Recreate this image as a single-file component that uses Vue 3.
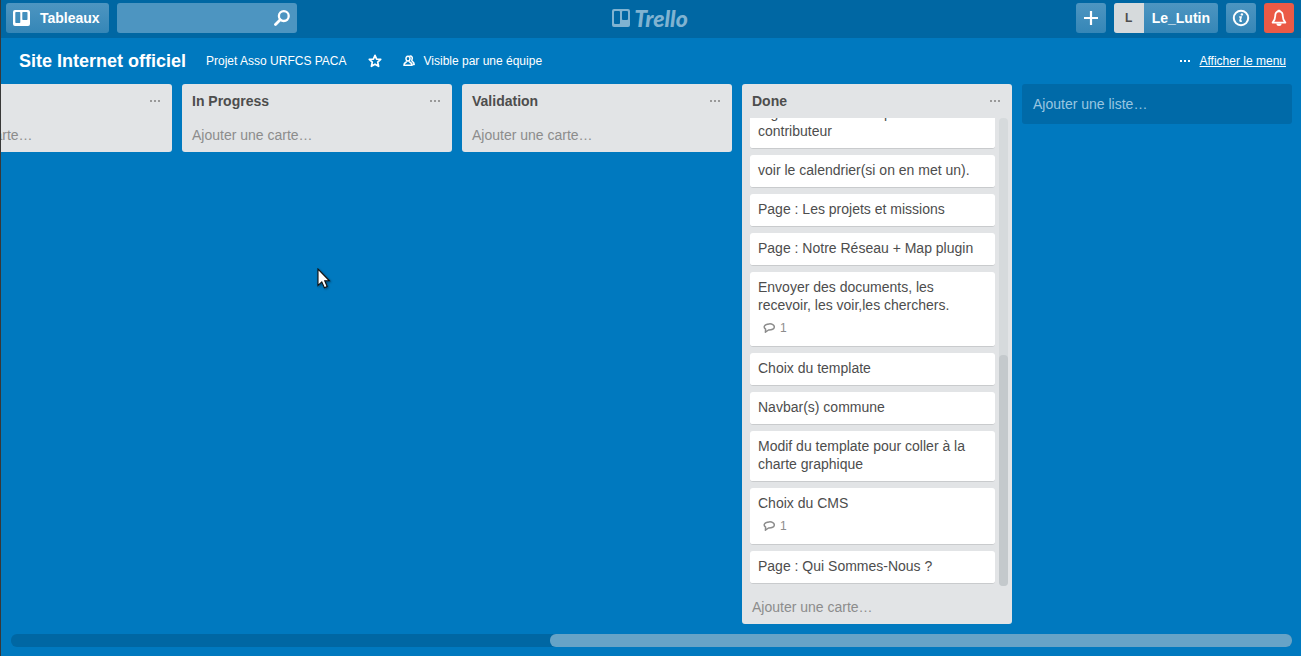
<script setup>
const lists = [
  { id: 1, title: '', cards: [] },
  { id: 2, title: 'In Progress', cards: [] },
  { id: 3, title: 'Validation', cards: [] },
  {
    id: 4,
    title: 'Done',
    scroll: { size: 49.4 },
    cards: [
      { text: 'Signaler une entrée pour le contributeur' },
      { text: 'voir le calendrier(si on en met un).' },
      { text: 'Page : Les projets et missions' },
      { text: 'Page : Notre Réseau + Map plugin' },
      { text: 'Envoyer des documents, les recevoir, les voir,les cherchers.', comments: 1 },
      { text: 'Choix du template' },
      { text: 'Navbar(s) commune' },
      { text: 'Modif du template pour coller à la charte graphique' },
      { text: 'Choix du CMS', comments: 1 },
      { text: 'Page : Qui Sommes-Nous ?' },
    ],
  },
]
const boardScroll = 57.9
</script>

<template>
  <div class="app">
    <header class="topbar">
      <div class="side">
        <button class="btn boards" type="button">
          <svg width="17" height="16" viewBox="0 0 17 16" aria-hidden="true">
            <path fill="#fff" fill-rule="evenodd" d="M2 0h13a2 2 0 0 1 2 2v12a2 2 0 0 1-2 2H2a2 2 0 0 1-2-2V2a2 2 0 0 1 2-2ZM3 2Q2.3 2 2.3 2.7V12.3Q2.3 13 3 13H6.6Q7.3 13 7.3 12.3V2.7Q7.3 2 6.6 2ZM10 2Q9.3 2 9.3 2.7V9.3Q9.3 10 10 10H13.8Q14.5 10 14.5 9.3V2.7Q14.5 2 13.8 2Z" />
          </svg>
          <span>Tableaux</span>
        </button>
        <div class="search">
          <input type="text" aria-label="Rechercher" />
          <button type="button" class="plain" aria-label="Lancer la recherche">
            <svg width="16" height="16" viewBox="0 0 16 16" fill="none" stroke="#fff" aria-hidden="true">
              <circle cx="9.8" cy="6.1" r="4.9" stroke-width="2.3" />
              <path d="M6.2 9.8 1.5 14.5" stroke-width="2.8" stroke-linecap="round" />
            </svg>
          </button>
        </div>
      </div>

      <a class="logo" href="#" aria-label="Trello">
        <svg width="18" height="18" viewBox="0 0 18 18" aria-hidden="true">
          <path fill="currentColor" fill-rule="evenodd" d="M2 0h14a2 2 0 0 1 2 2v14a2 2 0 0 1-2 2H2a2 2 0 0 1-2-2V2a2 2 0 0 1 2-2ZM3 2a1 1 0 0 0-1 1v11a1 1 0 0 0 1 1h4a1 1 0 0 0 1-1V3a1 1 0 0 0-1-1ZM11 2a1 1 0 0 0-1 1v7a1 1 0 0 0 1 1h4a1 1 0 0 0 1-1V3a1 1 0 0 0-1-1Z" />
        </svg>
        <span>Trello</span>
      </a>

      <div class="side end">
        <button class="btn square" type="button" aria-label="Créer">
          <svg width="14" height="14" viewBox="0 0 14 14" stroke="#fff" stroke-width="2.2" aria-hidden="true">
            <path d="M7 0v14M0 7h14" />
          </svg>
        </button>
        <button class="btn member" type="button">
          <span class="avatar">L</span>
          <span class="name">Le_Lutin</span>
        </button>
        <button class="btn square" type="button" aria-label="Informations">
          <svg width="18" height="18" viewBox="0 0 18 18" fill="none" stroke="#fff" aria-hidden="true">
            <circle cx="9" cy="9" r="7.2" stroke-width="2" />
            <path d="M7.2 8H9L8.1 11.6Q8 12.4 9.9 12" stroke-width="1.7" />
            <circle cx="9.9" cy="5.4" r="1.2" fill="#fff" stroke="none" />
          </svg>
        </button>
        <button class="btn square alert" type="button" aria-label="Notifications">
          <svg width="16" height="18" viewBox="0 0 16 18" fill="none" stroke="#fff" stroke-linejoin="round" aria-hidden="true">
            <path d="M8 2.4C5.2 2.4 4.2 4.5 4.2 7.2C4.2 10 3.5 11.5 1.6 13.6H14.4C12.5 11.5 11.8 10 11.8 7.2C11.8 4.5 10.8 2.4 8 2.4Z" stroke-width="1.8" />
            <path d="M7.4 1.8h1.2" stroke-width="2" stroke-linecap="round" />
            <path d="M5.4 14.5a2.6 2.5 0 0 0 5.2 0Z" fill="#fff" stroke="none" />
          </svg>
        </button>
      </div>
    </header>

    <div class="boardbar">
      <h1>Site Internet officiel</h1>
      <a class="org" href="#">Projet Asso URFCS PACA</a>
      <button class="plain star" type="button" aria-label="Ajouter aux favoris">
        <svg width="14" height="14" viewBox="0 0 14 14" fill="none" stroke="#fff" stroke-width="1.7" stroke-linejoin="round" aria-hidden="true">
          <path d="M7 1.4 8.6 5.1 12.7 5.4 9.7 8.1 10.6 12.3 7 10.2 3.4 12.3 4.3 8.1 1.3 5.4 5.4 5.1Z" />
        </svg>
      </button>
      <a class="visibility" href="#">
        <svg width="12" height="12" viewBox="0 0 12 12" fill="none" stroke="#fff" stroke-width="1.5" stroke-linejoin="round" aria-hidden="true">
          <path d="M5 1.3C3.4 1.3 2.9 2.5 3 3.8C3.1 5.2 4 6 5 6S6.9 5.2 7 3.8C7.1 2.5 6.6 1.3 5 1.3Z" />
          <path d="M3.9 6.2C3.9 7.4.9 7.2.9 10.3H9.1C9.1 7.2 6.1 7.4 6.1 6.2" />
          <path d="M6.6 1C8.8.6 9.8 2.4 9 4.4C8.4 5.8 8.6 6 9.6 6.6C10.8 7.4 11.2 8 11.2 9.6H9.4" />
        </svg>
        <span>Visible par une équipe</span>
      </a>
      <a class="show-menu" href="#">
        <svg width="10" height="2" viewBox="0 0 10 2" fill="#fff" aria-hidden="true">
          <path d="M0 0h2v2H0ZM4 0h2v2H4ZM8 0h2v2H8Z" />
        </svg>
        <span>Afficher le menu</span>
      </a>
    </div>

    <main class="lists">
      <section v-for="list in lists" :key="list.id" class="list">
        <header class="list-head">
          <h2 v-if="list.title">{{ list.title }}</h2>
          <button class="plain more" type="button" aria-label="Actions de la liste">
            <svg width="10" height="2" viewBox="0 0 10 2" fill="#999" aria-hidden="true">
              <path d="M0 0h2v2H0ZM4 0h2v2H4ZM8 0h2v2H8Z" />
            </svg>
          </button>
        </header>
        <div v-if="list.cards.length" class="list-body">
          <div class="cards">
            <article v-for="card in list.cards" :key="card.text" class="card">
              <p>{{ card.text }}</p>
              <div v-if="card.comments" class="badge">
                <svg width="12" height="10" viewBox="0 0 12 10" fill="none" stroke="#8c8c8c" stroke-width="1.5" stroke-linejoin="round" aria-hidden="true">
                  <path d="M6.2.9C9 .7 11.3 1.8 11.3 3.9C11.3 6 8.8 7.1 5.5 7L2.4 9.2L2.6 6.2C.2 4.4.8 1.2 6.2.9Z" />
                </svg>
                <span>{{ card.comments }}</span>
              </div>
            </article>
          </div>
          <div class="track" aria-hidden="true">
            <div class="thumb" :style="{ height: list.scroll.size + '%' }"></div>
          </div>
        </div>
        <a class="add-card" href="#">Ajouter une carte…</a>
      </section>
      <a class="add-list" href="#">Ajouter une liste…</a>
    </main>

    <div class="hscroll" aria-hidden="true">
      <div class="hthumb" :style="{ width: boardScroll + '%' }"></div>
    </div>

    <svg class="cursor" width="14" height="22" viewBox="0 0 14 22" aria-hidden="true">
      <path d="M1 1V17.4L4.8 13.9L7.4 19.8L10.2 18.5L7.7 12.8H12.4Z" fill="#fff" stroke="#111" stroke-width="1.1" />
    </svg>
  </div>
</template>

<style>
body {
  margin: 0;
}
</style>

<style scoped>
.app {
  position: relative;
  box-sizing: border-box;
  height: 100vh;
  display: flex;
  flex-direction: column;
  overflow: hidden;
  border-left: 1px solid #383838;
  background: #0079bf;
  color: #4d4d4d;
  font: 14px/18px "Liberation Sans", Arial, sans-serif;
}

a {
  color: inherit;
  text-decoration: none;
}

h1,
h2,
p {
  margin: 0;
}

svg {
  display: block;
  flex: none;
}

button {
  font: inherit;
  color: inherit;
  border: 0;
  cursor: pointer;
}

.plain {
  display: flex;
  padding: 0;
  background: none;
}

.topbar {
  flex: none;
  display: flex;
  align-items: center;
  height: 38px;
  padding: 0 7px 2px 5px;
  box-sizing: border-box;
  background: #0067a3;
  color: #fff;
}

.side {
  flex: 1;
  display: flex;
  gap: 8px;
}

.end {
  justify-content: flex-end;
}

.btn {
  display: flex;
  align-items: center;
  height: 30px;
  padding: 0;
  border-radius: 3px;
  background: linear-gradient(#4d95c1, #3586b7);
  font-weight: bold;
}

.boards {
  gap: 10px;
  padding: 0 9px 0 7px;
}

.search {
  display: flex;
  align-items: center;
  width: 180px;
  height: 30px;
  padding-right: 7px;
  box-sizing: border-box;
  border-radius: 3px;
  background: #4d95c1;
}

.search input {
  flex: 1;
  min-width: 0;
  height: 30px;
  padding: 0 8px;
  box-sizing: border-box;
  border: 0;
  outline: 0;
  background: none;
  color: #fff;
  font: inherit;
}

.logo {
  display: flex;
  align-items: center;
  gap: 4px;
  color: #80b3d1;
  font: italic 900 23px/24px Lato, "Liberation Sans", sans-serif;
}

.square {
  width: 30px;
  justify-content: center;
}

.alert {
  background: #eb5a46;
}

.member {
  overflow: hidden;
}

.avatar {
  width: 30px;
  background: #d6dadc;
  color: #4d4d4d;
  font-size: 12px;
  line-height: 30px;
}

.name {
  padding: 0 8px;
}

.boardbar {
  flex: none;
  display: flex;
  align-items: center;
  height: 46px;
  padding: 0 15px 0 18px;
  box-sizing: border-box;
  color: #fff;
  font-size: 12px;
}

h1 {
  font-size: 18px;
  line-height: 24px;
}

.org {
  margin-left: 20px;
}

.star {
  margin-left: 21px;
}

.visibility {
  display: flex;
  align-items: center;
  gap: 9px;
  margin-left: 21px;
}

.show-menu {
  display: flex;
  align-items: center;
  gap: 10px;
  margin-left: auto;
}

.show-menu span {
  text-decoration: underline;
}

.lists {
  flex: 1;
  min-height: 0;
  display: flex;
  align-items: flex-start;
  justify-content: flex-end;
  gap: 10px;
  padding-right: 9px;
  overflow: hidden;
}

.list {
  flex: none;
  display: flex;
  flex-direction: column;
  width: 270px;
  max-height: 100%;
  border-radius: 3px;
  background: #e2e4e6;
}

.list-head {
  flex: none;
  display: flex;
  align-items: center;
  height: 34px;
  padding: 0 12px 0 10px;
}

h2 {
  font-size: 14px;
  line-height: 18px;
}

.more {
  margin-left: auto;
}

.list-body {
  flex: 0 1 auto;
  min-height: 0;
  display: flex;
  gap: 4px;
  padding: 0 4px 4px 8px;
  overflow: hidden;
}

.cards {
  flex: 1;
  min-width: 0;
  display: flex;
  flex-direction: column;
  justify-content: flex-end;
  gap: 6px;
  padding-bottom: 2px;
  overflow: hidden;
}

.card {
  flex: none;
  padding: 6px 8px 8px;
  border-bottom: 1px solid #c9cbcd;
  border-radius: 3px;
  background: #fff;
}

.badge {
  display: flex;
  align-items: center;
  gap: 5px;
  height: 18px;
  padding: 5px 5px 1px;
  color: #8c8c8c;
  font-size: 12px;
}

.track {
  display: flex;
  flex-direction: column;
  justify-content: flex-end;
  width: 9px;
  border-radius: 4px;
  background: #d6dadc;
}

.thumb {
  border-radius: 4px;
  background: #c4c9cc;
}

.add-card {
  flex: none;
  padding: 8px 10px;
  color: #8c8c8c;
}

.add-list {
  flex: none;
  width: 270px;
  padding: 11px;
  box-sizing: border-box;
  border-radius: 3px;
  background: #006aa8;
  color: #99c6e1;
}

.hscroll {
  flex: none;
  display: flex;
  justify-content: flex-end;
  height: 13px;
  margin: 10px 9px 9px 10px;
  border-radius: 6px;
  background: #0067a3;
}

.hthumb {
  border-radius: 6px;
  background: #66a3c7;
}

.cursor {
  position: absolute;
  left: 316px;
  top: 268px;
  filter: drop-shadow(1px 1px 1px rgba(0, 0, 0, 0.4));
}
</style>
